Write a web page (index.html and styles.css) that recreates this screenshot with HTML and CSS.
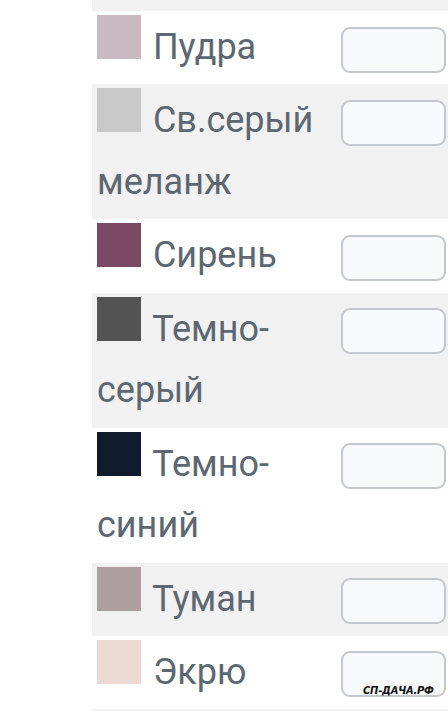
FILE: index.html
```html
<!DOCTYPE html>
<html lang="ru">
<head>
<meta charset="utf-8">
<title>Цвета</title>
<link rel="stylesheet" href="styles.css">
</head>
<body>
<div class="table">
  <div class="row gray partial"></div>
  <div class="row">
    <div class="name"><span class="sw sw-pudra"></span> Пудра</div>
    <div class="qty"><input class="inp" type="text"></div>
  </div>
  <div class="row gray">
    <div class="name"><span class="sw sw-svgray"></span> Св.серый меланж</div>
    <div class="qty"><input class="inp" type="text"></div>
  </div>
  <div class="row">
    <div class="name"><span class="sw sw-siren"></span> Сирень</div>
    <div class="qty"><input class="inp" type="text"></div>
  </div>
  <div class="row gray">
    <div class="name"><span class="sw sw-dgray"></span> Темно-серый</div>
    <div class="qty"><input class="inp" type="text"></div>
  </div>
  <div class="row">
    <div class="name"><span class="sw sw-dblue"></span> Темно-синий</div>
    <div class="qty"><input class="inp" type="text"></div>
  </div>
  <div class="row gray">
    <div class="name"><span class="sw sw-tuman"></span> Туман</div>
    <div class="qty"><input class="inp" type="text"></div>
  </div>
  <div class="row">
    <div class="name"><span class="sw sw-ecru"></span> Экрю</div>
    <div class="qty"><input class="inp" type="text"></div>
  </div>
  <div class="row gray partial-bottom"></div>
</div>
<div class="watermark">СП-ДАЧА.РФ</div>
</body>
</html>
```
FILE: styles.css
```css
html, body {
  margin: 0;
  padding: 0;
  background: #ffffff;
  overflow: hidden;
}
body {
  width: 448px;
  height: 711px;
  position: relative;
  font-family: Roboto, "Noto Sans", sans-serif;
}
.table {
  margin-left: 92px;
  width: 360px;
}
.row {
  display: flex;
  align-items: flex-start;
  background: #ffffff;
}
.row.gray {
  background: #f1f1f1;
}
.row.partial {
  height: 11px;
}
.row.partial-bottom {
  height: 20px;
}
.name {
  box-sizing: border-box;
  width: 243px;
  padding: 6px 0 5.5px 5px;
  font-size: 36px;
  line-height: 61.75px;
  color: #5c6771;
}
.sw {
  display: inline-block;
  width: 44px;
  height: 44px;
  margin-top: -20px;
  margin-right: 3px;
  vertical-align: baseline;
}
.sw-pudra { background: #c9b9c1; }
.sw-svgray { background: #c8c8c8; }
.sw-siren { background: #7b4863; }
.sw-dgray { background: #535353; }
.sw-dblue { background: #0f1b2c; }
.sw-tuman { background: #ad9f9f; }
.sw-ecru { background: #ecd9d3; }
.qty {
  padding: 15.5px 0 0 6px;
}
.inp {
  display: block;
  box-sizing: border-box;
  width: 105px;
  height: 46px;
  margin: 0;
  border: 2px solid #c4c7cb;
  border-radius: 9px;
  background: #f8f9fb;
}
.watermark {
  position: absolute;
  left: 363px;
  top: 684px;
  font-family: "DejaVu Sans Condensed", "DejaVu Sans", sans-serif;
  font-weight: bold;
  font-style: italic;
  font-size: 11px;
  line-height: 14px;
  color: #111111;
  letter-spacing: -0.2px;
}
```
